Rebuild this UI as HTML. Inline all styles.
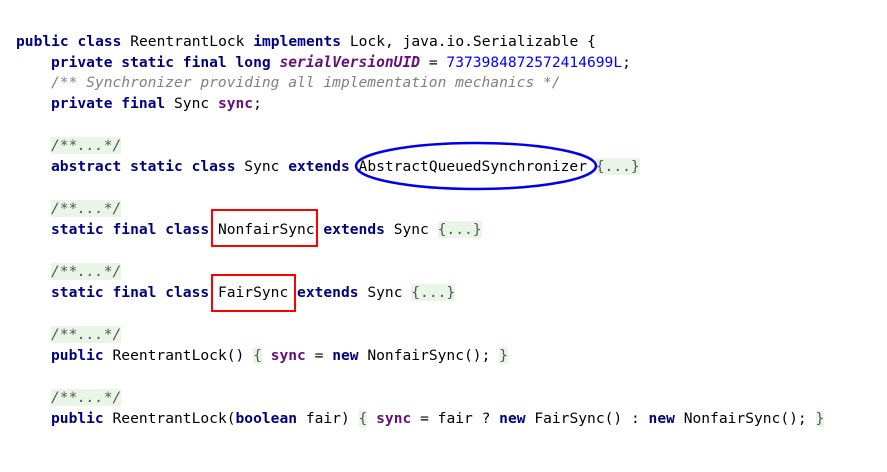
<!DOCTYPE html>
<html><head><style>
body{margin:0;width:887px;height:472px;background:#fff;position:relative;overflow:hidden}
.l{position:absolute;left:16px;font-family:"DejaVu Sans Mono","Liberation Mono",monospace;font-size:14.6px;line-height:20px;white-space:pre;color:#000;margin-top:1px}
.i{left:51px}
.k{color:#000080;font-weight:bold}
.p{color:#660e7a;font-weight:bold}
.f{color:#660e7a;font-weight:bold;font-style:italic}
.n{color:#0000ff}
.c{color:#808080;font-style:italic}
.g{background:#e9f5e6;color:#555}
.box{position:absolute;border:2.5px solid #f00;box-sizing:border-box}
</style></head><body>
<div class="l" style="top:31px"><span class="k">public class</span> ReentrantLock <span class="k">implements</span> Lock, java.io.Serializable {</div>
<div class="l i" style="top:52px"><span class="k">private static final long</span> <span class="f">serialVersionUID</span> = <span class="n">7373984872572414699L</span>;</div>
<div class="l i" style="top:72px"><span class="c">/** Synchronizer providing all implementation mechanics */</span></div>
<div class="l i" style="top:93px"><span class="k">private final</span> Sync <span class="p">sync</span>;</div>
<div class="l i" style="top:135px"><span class="c g">/**...*/</span></div>
<div class="l i" style="top:156px"><span class="k">abstract static class</span> Sync <span class="k">extends</span> AbstractQueuedSynchronizer <span class="g">{...}</span></div>
<div class="l i" style="top:198px"><span class="c g">/**...*/</span></div>
<div class="l i" style="top:219px"><span class="k">static final class</span> NonfairSync <span class="k">extends</span> Sync <span class="g">{...}</span></div>
<div class="l i" style="top:261px"><span class="c g">/**...*/</span></div>
<div class="l i" style="top:282px"><span class="k">static final class</span> FairSync <span class="k">extends</span> Sync <span class="g">{...}</span></div>
<div class="l i" style="top:324px"><span class="c g">/**...*/</span></div>
<div class="l i" style="top:345px"><span class="k">public</span> ReentrantLock() <span class="g">{</span> <span class="p">sync</span> = <span class="k">new</span> NonfairSync(); <span class="g">}</span></div>
<div class="l i" style="top:387px"><span class="c g">/**...*/</span></div>
<div class="l i" style="top:408px"><span class="k">public</span> ReentrantLock(<span class="k">boolean</span> fair) <span class="g">{</span> <span class="p">sync</span> = fair ? <span class="k">new</span> FairSync() : <span class="k">new</span> NonfairSync(); <span class="g">}</span></div>
<div class="box" style="left:211px;top:209px;width:107px;height:38px"></div>
<div class="box" style="left:211px;top:274px;width:85px;height:38px"></div>
<svg style="position:absolute;left:0;top:0" width="887" height="472"><ellipse cx="476" cy="166" rx="120" ry="23" fill="none" stroke="#0000ee" stroke-width="2.5"/></svg>
</body></html>
